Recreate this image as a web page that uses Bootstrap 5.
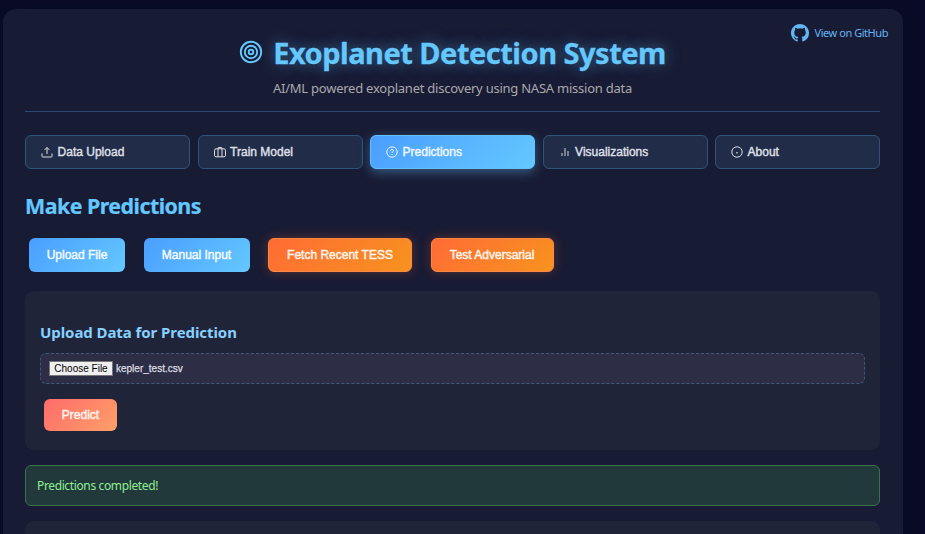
<!DOCTYPE html>
<html lang="en">
<head>
<meta charset="utf-8">
<meta name="viewport" content="width=device-width, initial-scale=1">
<title>Exoplanet Detection System</title>
<link href="https://cdn.jsdelivr.net/npm/bootstrap@5.3.0/dist/css/bootstrap.min.css" rel="stylesheet">
<style>
html, body { height: 100%; }
body { background: #0a0b28; color: #e0e0e0; font-family: "Segoe UI", "Noto Sans", sans-serif; overflow: hidden; }
.app-shell { width: 900px; height: 525px; margin: 9px 0 0 3px; padding: 0 23px 0 22px; border-radius: 13px 13px 0 0; background: #181b34; box-shadow: 0 4px 24px rgba(8,16,28,.8); }
.app-header { height: 103px; padding-top: 24px; border-bottom: 1px solid #2b4b72; }
.app-title { font-size: 29px; line-height: 40px; font-weight: 700; color: #64c8ff; text-shadow: 0 0 15px rgba(100,200,255,.5); letter-spacing: -.5px; -webkit-text-stroke: .3px currentColor; gap: 10px; }
.app-title svg { margin-top: -3px; }
.tagline { font-size: 13px; line-height: 18px; color: #a9a9ad; margin-top: 6px; letter-spacing: -.24px; }
.repo-link { top: 15px; right: -8px; gap: 6px; font-size: 11px; color: #64b5f6; letter-spacing: -.45px; }
.ui-btn { font-family: "Liberation Sans", Arial, sans-serif; font-size: 12px; line-height: 16px; font-weight: 400; -webkit-text-stroke: .45px currentColor; border-radius: 6px; height: 34px; padding: 0; color: #fff; white-space: nowrap; }
.ui-btn svg { -webkit-text-stroke: 0; }
.tab-row { margin-top: 23px; display: grid; grid-template-columns: repeat(5, 165px); column-gap: 7.5px; }
.tab-btn { background: #202c48; border: 1px solid #2f5478; color: #dedfe3; padding-left: 15px; gap: 4.6px; }
.tab-btn.current { background: linear-gradient(135deg, #4a9eff, #64c8ff); border-color: #64c0ff; color: #edf6ff; box-shadow: 0 3px 12px rgba(100,200,255,.4); }
.page-title { font-size: 21.4px; line-height: 30px; font-weight: 700; color: #64c8ff; margin: 22px 0 17px; letter-spacing: -.53px; -webkit-text-stroke: .2px currentColor; }
.btn-blue { background: linear-gradient(135deg, #4a9eff, #64c8ff); border: 0; color: #f3f9ff; }
.btn-orange { background: linear-gradient(135deg, #ff6b35, #f7931e); border: 1px solid #ff8943; color: #fff4ec; box-shadow: 0 0 11px rgba(255,107,53,.3); }
.btn-coral { background: linear-gradient(135deg, #ff6b6b, #ffa068); border: 0; height: 32px; width: 73px; color: #fff4ee; margin: 15px 0 0 4px; }
.actions { padding-left: 4px; gap: 18.5px; }
.w-a { width: 96px; } .w-b { width: 106px; } .w-c { width: 144px; } .w-d { width: 123px; }
.panel-box { background: #1f2439; border-radius: 9px; margin-top: 19px; height: 159px; padding: 31px 15px 0; }
.panel-title { font-size: 15px; line-height: 21px; font-weight: 700; color: #87d0ff; margin: 0 0 10px; letter-spacing: -.07px; }
.file-row { height: 31px; border: 1px dashed #3d5a7c; border-radius: 6px; background: #2d2d45; padding-left: 8px; gap: 3px; font: 10px/12px "Liberation Sans", Arial, sans-serif; color: #dddde2; }
.file-row span { -webkit-text-stroke: .25px currentColor; }
.choose { background: #efefef; border: 1px solid #767676; color: #000; height: 15px; width: 64px; padding: 0; font: inherit; }
.notice { height: 41px; margin-top: 15px; padding-left: 11px; border: 1px solid #38734a; border-radius: 6px; background: #22393c; color: #90ee90; font-size: 12px; letter-spacing: -.37px; }
.panel-box.results { margin-top: 15px; height: 13px; padding: 0; border-radius: 9px 9px 0 0; }
</style>
</head>
<body>
<main class="app-shell">
  <header class="app-header position-relative text-center">
    <a class="repo-link position-absolute d-flex align-items-center text-decoration-none" href="#">
      <svg width="18" height="18" viewBox="0 0 16 16" fill="currentColor"><path d="M8 0C3.58 0 0 3.58 0 8c0 3.54 2.29 6.53 5.47 7.59.4.07.55-.17.55-.38 0-.19-.01-.82-.01-1.49-2.01.37-2.53-.49-2.69-.94-.09-.23-.48-.94-.82-1.13-.28-.15-.68-.52-.01-.53.63-.01 1.08.58 1.23.82.72 1.21 1.87.87 2.33.66.07-.52.28-.87.51-1.07-1.78-.2-3.64-.89-3.64-3.95 0-.87.31-1.59.82-2.15-.08-.2-.36-1.02.08-2.12 0 0 .67-.21 2.2.82a7.6 7.6 0 0 1 4 0c1.53-1.04 2.2-.82 2.2-.82.44 1.1.16 1.92.08 2.12.51.56.82 1.27.82 2.15 0 3.07-1.87 3.75-3.65 3.95.29.25.54.73.54 1.48 0 1.07-.01 1.93-.01 2.2 0 .21.15.46.55.38A8.01 8.01 0 0 0 16 8c0-4.42-3.58-8-8-8z"/></svg>
      <span>View on GitHub</span>
    </a>
    <h1 class="app-title d-flex justify-content-center align-items-center m-0">
      <svg width="24" height="24" viewBox="0 0 24 24" fill="none" stroke="currentColor" stroke-width="1.9"><circle cx="12" cy="12" r="10.2"/><circle cx="12" cy="12" r="6.2"/><circle cx="12" cy="12" r="2.3"/></svg>
      <span>Exoplanet Detection System</span>
    </h1>
    <p class="tagline mb-0">AI/ML powered exoplanet discovery using NASA mission data</p>
  </header>

  <nav class="tab-row">
    <button class="btn ui-btn tab-btn d-flex align-items-center"><svg width="12" height="12" viewBox="0 0 12 12" fill="none" stroke="currentColor" stroke-width="1"><path d="M1 7.5v2.8q0 .7.7.7h8.6q.7 0 .7-.7V7.5M6 8V1.5M3.5 4 6 1.5 8.500 4"/></svg>Data Upload</button>
    <button class="btn ui-btn tab-btn d-flex align-items-center"><svg width="12" height="12" viewBox="0 0 12 12" fill="none" stroke="currentColor" stroke-width="1"><rect x=".5" y="2.800" width="11" height="8" rx="1.500"/><path d="M4 10.800V2.200Q4 1.500 4.700 1.500H7.300Q8 1.500 8 2.200V10.800"/></svg>Train Model</button>
    <button class="btn ui-btn tab-btn current d-flex align-items-center"><svg width="12" height="12" viewBox="0 0 12 12" fill="none" stroke="currentColor" stroke-width="1"><circle cx="6" cy="6" r="5.200"/><path d="M4.500 4.700C4.700 3 7.500 3.200 7.500 4.800 7.500 5.900 6 5.900 6 7M6 8v.9"/></svg>Predictions</button>
    <button class="btn ui-btn tab-btn d-flex align-items-center"><svg width="12" height="12" viewBox="0 0 12 12" fill="none" stroke="currentColor" stroke-width="1.400" opacity=".65"><path d="M3 10V7M6 10V2M9 10V5"/></svg>Visualizations</button>
    <button class="btn ui-btn tab-btn d-flex align-items-center"><svg width="12" height="12" viewBox="0 0 12 12" fill="none" stroke="currentColor" stroke-width="1"><circle cx="6" cy="6" r="5.200"/><path d="M6 6v1.500" stroke-width="1.300"/></svg>About</button>
  </nav>

  <section>
    <h2 class="page-title">Make Predictions</h2>
    <div class="actions d-flex">
      <button class="btn ui-btn btn-blue w-a">Upload File</button>
      <button class="btn ui-btn btn-blue w-b">Manual Input</button>
      <button class="btn ui-btn btn-orange w-c">Fetch Recent TESS</button>
      <button class="btn ui-btn btn-orange w-d">Test Adversarial</button>
    </div>

    <div class="panel-box">
      <h3 class="panel-title">Upload Data for Prediction</h3>
      <div class="file-row d-flex align-items-center"><button class="choose">Choose File</button><span>kepler_test.csv</span></div>
      <button class="btn ui-btn btn-coral">Predict</button>
    </div>

    <div class="notice d-flex align-items-center" role="status">Predictions completed!</div>
    <div class="panel-box results"></div>
  </section>
</main>
<script src="https://cdn.jsdelivr.net/npm/bootstrap@5.3.0/dist/js/bootstrap.bundle.min.js"></script>
</body>
</html>
